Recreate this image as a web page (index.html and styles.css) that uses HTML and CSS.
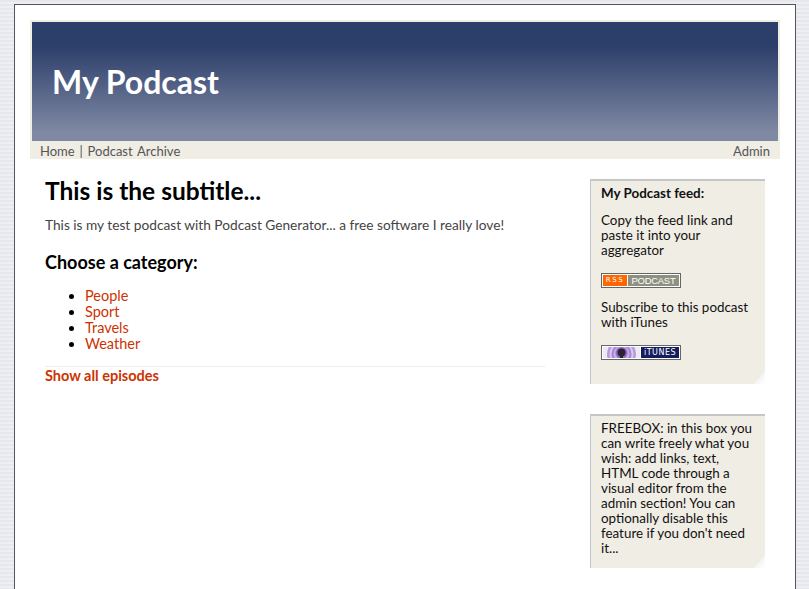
FILE: index.html
```html
<!DOCTYPE html>
<html>
<head>
  <title>My Podcast</title>
  <meta name="viewport" content="width=device-width, initial-scale=1.0">
  <link rel="stylesheet" href="styles.css">
</head>
<body>
  <div id="wrapper">
    <div id="header">
      <div id="banner">
        <h1>My Podcast</h1>
      </div>
      <div id="nav">
        <div class="nav-links"><a href="#">Home</a> | <a href="#">Podcast Archive</a></div>
        <a href="#">Admin</a>
      </div>
    </div>

    <div id="content">
      <div id="main">
        <h2 class="subtitle">This is the subtitle...</h2>
        <p class="intro">This is my test podcast with Podcast Generator... a free software I really love!</p>
        <h3 class="choose">Choose a category:</h3>
        <ul class="categories">
          <li><a href="#">People</a></li>
          <li><a href="#">Sport</a></li>
          <li><a href="#">Travels</a></li>
          <li><a href="#">Weather</a></li>
        </ul>
        <div class="all-episodes"><a href="#">Show all episodes</a></div>
      </div>

      <div id="sidebar">
        <div class="box feed-box">
          <p class="box-title">My Podcast feed:</p>
          <p class="box-text">Copy the feed link and paste it into your aggregator</p>
          <div class="badge">
            <span class="badge-rss">RSS</span>
            <span class="badge-podcast">PODCAST</span>
          </div>
          <p class="box-text">Subscribe to this podcast with iTunes</p>
          <div class="badge">
            <span class="badge-art">
              <svg width="37" height="11" viewBox="0 0 37 11">
                <rect width="37" height="11" fill="#efe9f6"/>
                <circle cx="18.5" cy="7" r="14.5" fill="#b79ade"/>
                <circle cx="18.5" cy="7" r="12" fill="#d9c8ee"/>
                <circle cx="18.5" cy="7" r="10" fill="#a583d6"/>
                <circle cx="18.5" cy="7" r="8" fill="#c6aee6"/>
                <circle cx="18.5" cy="6" r="6" fill="#8f6cc8"/>
                <circle cx="18.5" cy="5.5" r="4" fill="#2b2430"/>
                <rect x="17" y="7" width="3" height="4" fill="#2b2430"/>
              </svg>
            </span>
            <span class="badge-itunes">iTUNES</span>
          </div>
          <div class="fold"></div>
        </div>

        <div class="box free-box">
          <p class="box-text">FREEBOX: in this box you can write freely what you wish: add links, text, HTML code through a visual editor from the admin section! You can optionally disable this feature if you don't need it...</p>
          <div class="fold"></div>
        </div>
      </div>
    </div>
  </div>
</body>
</html>
```

FILE: styles.css
```css
html, body {
  height: 100%;
}

body {
  margin: 0;
  padding: 4px 13px 0 14px;
  box-sizing: border-box;
  overflow: hidden;
  font-family: Lato, sans-serif;
  font-size: 14.5px;
  color: #000;
  background: repeating-linear-gradient(to bottom, #e6e7ec 0, #e6e7ec 2px, #eeeff3 2px, #eeeff3 4px);
}

#wrapper {
  height: 100%;
  box-sizing: border-box;
  padding: 15px;
  background: #fff;
  border: 1px solid #555;
  border-bottom: 0;
}

#banner {
  height: 119px;
  border: 2px solid #f0ede5;
  border-bottom: 0;
  background: linear-gradient(to bottom, #2c3e6a 0, #2c3e6a 20%, #7f89a4 93%, #7f89a4 100%);
}

#banner h1 {
  margin: 0;
  padding: 40px 0 0 20px;
  font-size: 32px;
  line-height: 40px;
  font-weight: bold;
  color: #fff;
}

#nav {
  display: flex;
  justify-content: space-between;
  height: 18px;
  line-height: 20px;
  padding: 0 10px;
  font-size: 13px;
  color: #555;
  background: #f0ede5;
}

#nav a {
  color: #555;
  text-decoration: none;
}

.nav-links {
  word-spacing: 1.5px;
}

#content {
  display: flex;
  justify-content: space-between;
  padding: 20px 15px 0;
}

#main {
  width: 500px;
}

.subtitle {
  margin: 0;
  font-size: 24.5px;
  line-height: 24px;
}

.intro {
  margin: 12px 0 0;
  font-size: 13.7px;
  line-height: 20px;
  color: #444;
}

.choose {
  margin: 16px 0 0;
  font-size: 18px;
  line-height: 22px;
}

.categories {
  margin: 15px 0 0;
  padding-left: 40px;
  line-height: 16px;
}

.categories a,
.all-episodes a {
  color: #cc3300;
  text-decoration: none;
}

.all-episodes {
  margin-top: 14px;
  padding-top: 1px;
  border-top: 1px solid #eee;
  font-weight: bold;
  line-height: 16px;
}

#sidebar {
  width: 175px;
}

.box {
  position: relative;
  box-sizing: border-box;
  padding: 4px 10px 0;
  font-size: 13.4px;
  background: #f0ede5;
  border-top: 2px solid #c6c6c6;
  border-left: 1px solid #c6c6c6;
  line-height: 15px;
  color: #111;
}

.feed-box {
  height: 205px;
}

.free-box {
  height: 154px;
  margin-top: 30px;
  padding-top: 5px;
}

.box-title {
  margin: 0;
  font-weight: bold;
  line-height: 16px;
}

.box-text {
  margin: 0;
}

.feed-box .box-title + .box-text {
  margin-top: 12px;
}

.feed-box .badge + .box-text {
  margin-top: 12px;
}

.badge {
  display: flex;
  gap: 1px;
  width: 80px;
  height: 15px;
  margin-top: 15px;
  box-sizing: border-box;
  padding: 1px;
  border: 1px solid #666;
  background: #fff;
  font-family: "Liberation Sans", sans-serif;
  font-size: 9.5px;
  line-height: 11px;
}

.badge-rss {
  width: 24px;
  text-align: center;
  color: #fff;
  background: #ff6600;
  font-family: "DejaVu Sans", sans-serif;
  font-size: 7px;
  letter-spacing: 1.5px;
}

.badge-podcast {
  flex: 1;
  text-align: center;
  color: #fff;
  background: #8f9180;
  letter-spacing: -0.3px;
}

.badge-art {
  width: 37px;
  height: 11px;
}

.badge-art svg {
  display: block;
}

.badge-itunes {
  flex: 1;
  text-align: center;
  color: #fff;
  background: #141d5e;
  font-family: "DejaVu Sans", sans-serif;
  font-size: 8px;
  letter-spacing: 0.5px;
}

.fold {
  position: absolute;
  right: 0;
  bottom: 0;
  width: 12px;
  height: 12px;
  background: linear-gradient(135deg, transparent 50%, #f4f4f4 50%, #fff 100%);
}
```
